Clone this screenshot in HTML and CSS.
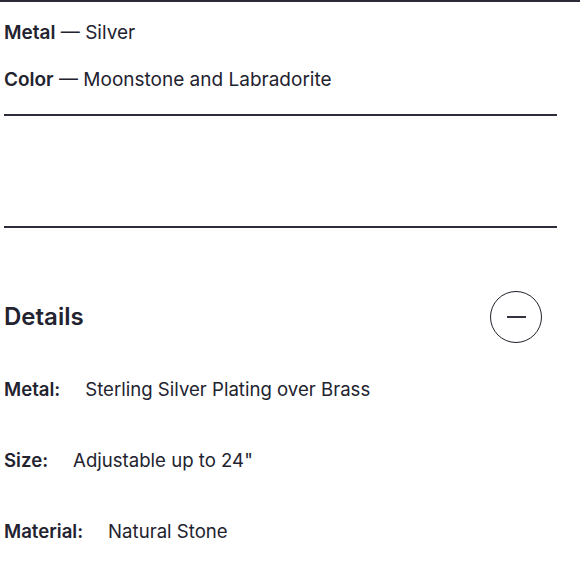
FILE: index.html
```html
<!DOCTYPE html>
<html>
<head>
<meta charset="utf-8">
<link rel="stylesheet" href="styles.css">
</head>
<body>
<div class="page">
  <div class="summary">
    <p class="attr"><b>Metal</b> — Silver</p>
    <p class="attr"><b>Color</b> — Moonstone and Labradorite</p>
  </div>
  <div class="spacer"></div>
  <section class="details">
    <div class="details-head">
      <h2>Details</h2>
      <button class="toggle" aria-label="Collapse"><span class="minus"></span></button>
    </div>
    <ul class="spec">
      <li><span class="label">Metal:</span><span>Sterling Silver Plating over Brass</span></li>
      <li><span class="label">Size:</span><span>Adjustable up to 24"</span></li>
      <li><span class="label">Material:</span><span>Natural Stone</span></li>
    </ul>
  </section>
</div>
</body>
</html>
```
FILE: styles.css
```css
html, body {
  margin: 0;
  padding: 0;
  background: #fff;
}
body {
  font-family: Inter, "Liberation Sans", sans-serif;
  color: #23232f;
  border-top: 2px solid #2c2c38;
}
.page {
  padding: 0 23px 0 4px;
}
.summary {
  padding-top: 19px;
  border-bottom: 2px solid #2c2c3a;
  padding-bottom: 23px;
}
.attr {
  margin: 0;
  font-size: 19px;
  line-height: 23px;
}
.attr + .attr {
  margin-top: 24px;
}
.attr b {
  font-weight: 600;
}
.spacer {
  height: 110px;
  border-bottom: 2px solid #2c2c3a;
}
.details-head {
  display: flex;
  justify-content: space-between;
  align-items: center;
  margin-top: 63px;
}
.details-head h2 {
  margin: 0;
  font-size: 24px;
  font-weight: 600;
  line-height: 30px;
}
.toggle {
  width: 52px;
  height: 52px;
  border: 1.6px solid #1f1f2a;
  border-radius: 50%;
  background: none;
  padding: 0;
  display: flex;
  align-items: center;
  justify-content: center;
  margin-right: 15px;
}
.minus {
  width: 19px;
  height: 2px;
  background: #33333f;
}
.spec {
  list-style: none;
  margin: 0;
  padding: 0;
}
.spec li {
  font-size: 18.6px;
  line-height: 23px;
  margin-top: 48px;
}
.spec li:first-child {
  margin-top: 35px;
}
.label {
  font-weight: 600;
  margin-right: 25px;
}
```
